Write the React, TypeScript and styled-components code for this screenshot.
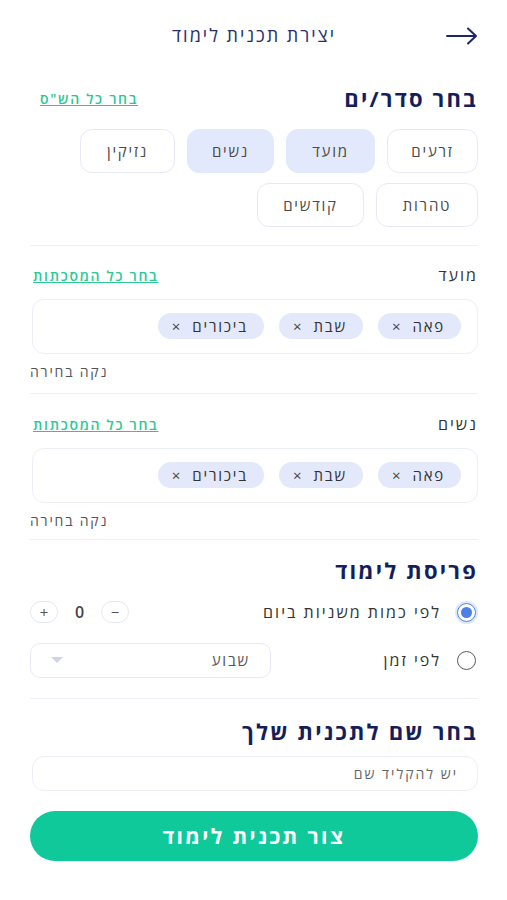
import React, { useState } from 'react';
import styled, { createGlobalStyle } from 'styled-components';

const GlobalStyle = createGlobalStyle`
  body {
    margin: 0;
    background: #ffffff;
    font-family: 'Open Sans', 'DejaVu Sans', sans-serif;
    color: #333333;
  }
  * { box-sizing: border-box; }
`;

const Page = styled.div`
  direction: rtl;
  width: 507px;
  padding: 0 29px 0 30px;
`;

const Header = styled.header`
  display: grid;
  grid-template-columns: 32px 1fr 32px;
  align-items: center;
  height: 72px;
`;

const BackButton = styled.button`
  border: none;
  background: none;
  padding: 0;
  display: flex;
  align-items: center;
  color: #1d2766;
  cursor: pointer;
`;

const HeaderTitle = styled.h1`
  margin: 0 0 2px;
  text-align: center;
  font-size: 18px;
  font-weight: 400;
  letter-spacing: 2px;
  color: #262f6c;
`;

const Section = styled.section<{ $top: number; $bottom: number; $divider?: boolean }>`
  padding-top: ${({ $top }) => $top}px;
  padding-bottom: ${({ $bottom }) => $bottom}px;
  border-bottom: ${({ $divider }) => ($divider ? '1px solid #eef0f8' : 'none')};
`;

const TitleRow = styled.div`
  display: flex;
  justify-content: space-between;
  align-items: center;
`;

const Heading = styled.h2`
  margin: 0;
  font-size: 22px;
  line-height: 26px;
  font-weight: 700;
  letter-spacing: 2.2px;
  color: #141e5b;
`;

const Label = styled.div`
  font-size: 16px;
  line-height: 20px;
  letter-spacing: 2px;
  color: #333333;
`;

const GreenLink = styled.a<{ $offset: number }>`
  margin-left: ${({ $offset }) => $offset}px;
  font-size: 14px;
  font-weight: 600;
  letter-spacing: 1.7px;
  color: #2cc894;
  text-decoration: underline;
  cursor: pointer;
`;

const SederGrid = styled.div`
  display: flex;
  flex-wrap: wrap;
  gap: 10px 12px;
  margin-top: 18px;
  padding-left: 48px;
`;

const SederButton = styled.button<{ $selected?: boolean; $width: number }>`
  width: ${({ $width }) => $width}px;
  height: 44px;
  border-radius: 12px;
  border: 1.5px solid ${({ $selected }) => ($selected ? '#e3e9fc' : '#e7e9f8')};
  background: ${({ $selected }) => ($selected ? '#e3e9fc' : '#ffffff')};
  font-family: inherit;
  font-size: 15px;
  letter-spacing: 1.8px;
  color: #4a4a4a;
  cursor: pointer;
`;

const ChipBox = styled.div`
  display: flex;
  align-items: center;
  gap: 15px;
  height: 55px;
  margin-top: 14px;
  margin-left: 2px;
  padding: 0 16px 2px;
  border: 1px solid #eceff8;
  border-radius: 12px;
`;

const Chip = styled.span`
  display: inline-flex;
  align-items: center;
  gap: 12px;
  height: 26px;
  padding: 0 16px 0 14px;
  border-radius: 13px;
  background: #e3e9fb;
  font-size: 15px;
  letter-spacing: 1.8px;
  color: #333333;
`;

const ChipX = styled.span`
  font-size: 15px;
  letter-spacing: 0;
  color: #444444;
`;

const ClearLink = styled.div`
  margin-top: 9px;
  font-size: 14px;
  line-height: 18px;
  letter-spacing: 1.8px;
  color: #555555;
  text-align: left;
`;

const RadioRow = styled.label`
  display: flex;
  align-items: center;
  height: 34px;
  margin-top: 12px;
  & + & {
    margin-top: 14px;
  }
`;

const RadioCircle = styled.span<{ $checked?: boolean }>`
  display: inline-flex;
  align-items: center;
  justify-content: center;
  width: 19px;
  height: 19px;
  margin-right: 2px;
  border-radius: 50%;
  border: 1.5px solid ${({ $checked }) => ($checked ? '#4b7fe6' : '#5a5a5a')};
  box-shadow: ${({ $checked }) => ($checked ? '0 0 0 2px #dfe7fb' : 'none')};
  &::after {
    content: '';
    width: 11px;
    height: 11px;
    border-radius: 50%;
    background: ${({ $checked }) => ($checked ? '#4b7fe6' : 'transparent')};
  }
`;

const RadioText = styled.span`
  margin-right: 16px;
  font-size: 16px;
  letter-spacing: 2px;
  color: #333333;
`;

const Stepper = styled.div`
  display: flex;
  align-items: center;
  gap: 17px;
  margin-right: auto;
`;

const StepButton = styled.button`
  width: 28px;
  height: 22px;
  border-radius: 11px;
  border: 1px solid #e6e9f3;
  background: #ffffff;
  font-family: inherit;
  font-size: 15px;
  line-height: 1;
  color: #555555;
  padding: 0;
`;

const StepValue = styled.span`
  font-size: 16px;
  font-weight: 600;
  color: #444444;
`;

const SelectBox = styled.div`
  display: flex;
  align-items: center;
  justify-content: space-between;
  width: 241px;
  height: 35px;
  margin-right: auto;
  padding: 0 20px 0 20px;
  border: 1px solid #e8e9f8;
  border-radius: 10px;
  font-size: 15px;
  letter-spacing: 1.8px;
  color: #555555;
`;

const Caret = styled.span`
  width: 0;
  height: 0;
  border-left: 6px solid transparent;
  border-right: 6px solid transparent;
  border-top: 6px solid #d0d2ee;
`;

const NameInput = styled.input`
  display: block;
  width: 446px;
  height: 35px;
  margin-top: 12px;
  padding: 0 19px;
  border: 1px solid #eceff8;
  border-radius: 12px;
  font-family: inherit;
  font-size: 14px;
  letter-spacing: 2px;
  color: #333333;
  direction: rtl;
  &::placeholder {
    color: #666666;
  }
`;

const SubmitButton = styled.button`
  display: block;
  width: 448px;
  height: 50px;
  margin-top: 20px;
  border: none;
  border-radius: 25px;
  background: #10c99b;
  font-family: inherit;
  font-size: 21px;
  font-weight: 700;
  letter-spacing: 2.4px;
  color: #ffffff;
  cursor: pointer;
`;

const sedarim = [
  { name: 'זרעים', width: 91 },
  { name: 'מועד', width: 89 },
  { name: 'נשים', width: 87 },
  { name: 'נזיקין', width: 95 },
  { name: 'טהרות', width: 102 },
  { name: 'קודשים', width: 107 },
];

const masechtot = ['פאה', 'שבת', 'ביכורים'];

const ArrowIcon = () => (
  <svg width="32" height="18" viewBox="0 0 32 18" fill="none">
    <path d="M1 9H30M22 1.5L30 9L22 16.5" stroke="currentColor" strokeWidth="2" strokeLinecap="round" strokeLinejoin="round" />
  </svg>
);

const MasechtotBlock: React.FC<{ title: string }> = ({ title }) => (
  <>
    <TitleRow>
      <Label>{title}</Label>
      <GreenLink $offset={3}>בחר כל המסכתות</GreenLink>
    </TitleRow>
    <ChipBox>
      {masechtot.map((m) => (
        <Chip key={m}>
          {m}
          <ChipX>×</ChipX>
        </Chip>
      ))}
    </ChipBox>
    <ClearLink>נקה בחירה</ClearLink>
  </>
);

const App: React.FC = () => {
  const [selected] = useState<string[]>(['מועד', 'נשים']);
  const [mode, setMode] = useState<'amount' | 'time'>('amount');
  const [count, setCount] = useState(0);

  return (
    <>
      <GlobalStyle />
      <Page>
        <Header>
          <BackButton>
            <ArrowIcon />
          </BackButton>
          <HeaderTitle>יצירת תכנית לימוד</HeaderTitle>
          <span />
        </Header>

        <Section $top={13} $bottom={18} $divider>
          <TitleRow>
            <Heading>בחר סדר/ים</Heading>
            <GreenLink $offset={10}>בחר כל הש"ס</GreenLink>
          </TitleRow>
          <SederGrid>
            {sedarim.map((s) => (
              <SederButton key={s.name} $width={s.width} $selected={selected.includes(s.name)}>
                {s.name}
              </SederButton>
            ))}
          </SederGrid>
        </Section>

        <Section $top={19} $bottom={12} $divider>
          <MasechtotBlock title="מועד" />
        </Section>

        <Section $top={20} $bottom={9} $divider>
          <MasechtotBlock title="נשים" />
        </Section>

        <Section $top={17} $bottom={21} $divider>
          <Heading>פריסת לימוד</Heading>
          <RadioRow onClick={() => setMode('amount')}>
            <RadioCircle $checked={mode === 'amount'} />
            <RadioText>לפי כמות משניות ביום</RadioText>
            <Stepper>
              <StepButton onClick={() => setCount(Math.max(0, count - 1))}>−</StepButton>
              <StepValue>{count}</StepValue>
              <StepButton onClick={() => setCount(count + 1)}>+</StepButton>
            </Stepper>
          </RadioRow>
          <RadioRow onClick={() => setMode('time')}>
            <RadioCircle $checked={mode === 'time'} />
            <RadioText>לפי זמן</RadioText>
            <SelectBox>
              <span>שבוע</span>
              <Caret />
            </SelectBox>
          </RadioRow>
        </Section>

        <Section $top={19} $bottom={40}>
          <Heading>בחר שם לתכנית שלך</Heading>
          <NameInput placeholder="יש להקליד שם" />
          <SubmitButton>צור תכנית לימוד</SubmitButton>
        </Section>
      </Page>
    </>
  );
};

export default App;
